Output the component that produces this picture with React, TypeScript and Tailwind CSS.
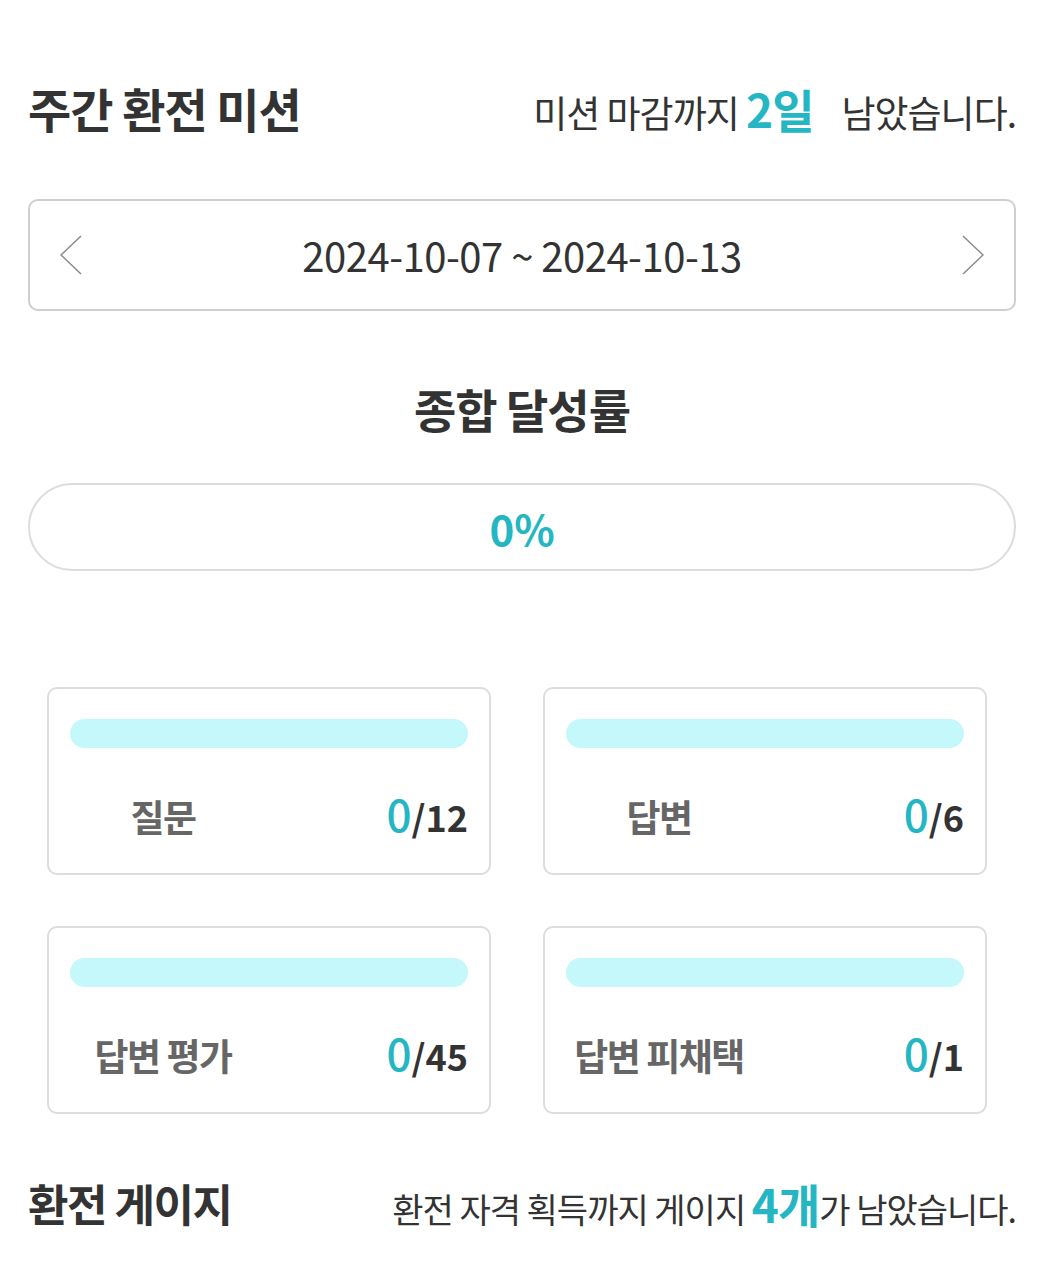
import { ReactNode } from 'react';

const font = { fontFamily: '"Noto Sans CJK KR", "Noto Sans", sans-serif' };

interface MissionCardProps {
  label: string;
  done: number;
  total: number;
}

function MissionCard({ label, done, total }: MissionCardProps) {
  const pct = total > 0 ? (done / total) * 100 : 0;
  return (
    <div className="h-[188px] rounded-[10px] border-2 border-[#dddddd] bg-white px-[21px] pt-[30px]">
      <div className="h-[29px] w-full rounded-full bg-[#c4f8fb] overflow-hidden">
        <div className="h-full rounded-full bg-[#25b6c4]" style={{ width: `${pct}%` }} />
      </div>
      <div className="mt-[39px] flex h-[60px] items-center justify-between">
        <div className="w-[186px] text-center text-[37px] font-bold tracking-[-1.5px] text-[#666666]">
          {label}
        </div>
        <div className="flex items-baseline pb-[8px]">
          <span className="text-[44px] font-medium leading-none text-[#25b6c4]">{done}</span>
          <span className="text-[36px] font-bold leading-none text-[#333333]">/{total}</span>
        </div>
      </div>
    </div>
  );
}

interface SectionHeaderProps {
  title: string;
  titleClass: string;
  noteClass: string;
  children: ReactNode;
}

function SectionHeader({ title, titleClass, noteClass, children }: SectionHeaderProps) {
  return (
    <div className="flex h-[60px] items-center justify-between">
      <h2 className={`font-bold text-[#333333] ${titleClass}`}>{title}</h2>
      <p className={`flex items-baseline text-[#333333] ${noteClass}`}>{children}</p>
    </div>
  );
}

export default function App() {
  const missions = [
    { label: '질문', done: 0, total: 12 },
    { label: '답변', done: 0, total: 6 },
    { label: '답변 평가', done: 0, total: 45 },
    { label: '답변 피채택', done: 0, total: 1 },
  ];

  return (
    <div className="min-h-[1270px] bg-white" style={font}>
      <div className="ml-[28px] w-[988px] pt-[78px]">
        {/* Weekly mission header */}
        <SectionHeader
          title="주간 환전 미션"
          titleClass="text-[47px] tracking-[-1px]"
          noteClass="text-[37px] tracking-[-1px]"
        >
          미션 마감까지&nbsp;
          <span className="text-[46px] font-bold text-[#25b6c4]">2일</span>
          <span className="ml-[28px]">남았습니다.</span>
        </SectionHeader>

        {/* Week selector */}
        <div className="mt-[61px] flex h-[112px] items-center justify-between rounded-[10px] border-2 border-[#cfcfcf] px-[30px]">
          <button className="flex h-[40px] w-[22px] items-center justify-center">
            <svg width="22" height="40" viewBox="0 0 22 40" fill="none">
              <path d="M21 1 L1 20 L21 39" stroke="#8a8a8a" strokeWidth="1.5" />
            </svg>
          </button>
          <span className="text-[40px] tracking-[-0.5px] text-[#333333]">2024-10-07 ~ 2024-10-13</span>
          <button className="flex h-[40px] w-[22px] items-center justify-center">
            <svg width="22" height="40" viewBox="0 0 22 40" fill="none">
              <path d="M1 1 L21 20 L1 39" stroke="#8a8a8a" strokeWidth="1.5" />
            </svg>
          </button>
        </div>

        {/* Overall progress */}
        <div className="mt-[67px] flex h-[60px] items-center justify-center">
          <h3 className="text-[46px] font-bold tracking-[-1px] text-[#333333]">종합 달성률</h3>
        </div>
        <div className="mt-[45px] flex h-[88px] items-center justify-center rounded-full border-2 border-[#dddddd]">
          <span className="text-[42px] font-semibold text-[#25b6c4]">0%</span>
        </div>

        {/* Mission cards */}
        <div className="ml-[19px] mt-[116px] grid w-[940px] grid-cols-2 gap-x-[52px] gap-y-[51px]">
          {missions.map(m => (
            <MissionCard key={m.label} label={m.label} done={m.done} total={m.total} />
          ))}
        </div>

        {/* Exchange gauge header */}
        <div className="mt-[59px]">
          <SectionHeader
            title="환전 게이지"
            titleClass="text-[44px] tracking-[-1.5px]"
            noteClass="text-[34px] tracking-[-1px]"
          >
            환전 자격 획득까지 게이지&nbsp;
            <span className="text-[46px] font-bold text-[#25b6c4]">4개</span>가 남았습니다.
          </SectionHeader>
        </div>
      </div>
    </div>
  );
}
